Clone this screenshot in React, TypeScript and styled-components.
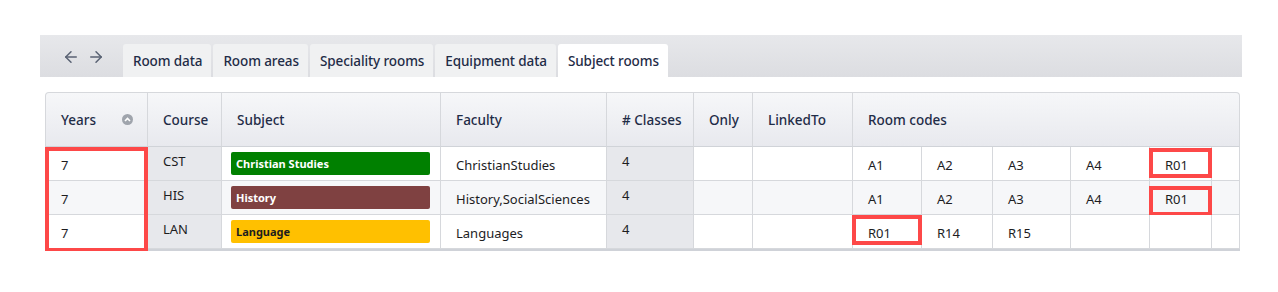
import styled, { createGlobalStyle } from 'styled-components';
import { ArrowLeft, ArrowRight } from 'lucide-react';

const GlobalStyle = createGlobalStyle`
  body {
    margin: 0;
    background: #fff;
    font-family: "Noto Sans", "Open Sans", sans-serif;
    color: #1d1d1f;
  }
`;

const Page = styled.div`
  padding: 35px 0 0 40px;
`;

const TabBar = styled.div`
  display: flex;
  align-items: flex-end;
  width: 1202px;
  height: 42px;
  background: linear-gradient(#e7e8eb, #dcdde1);
`;

const Nav = styled.div`
  display: flex;
  align-self: center;
  gap: 7px;
  padding: 2px 18px 0 22px;
  color: #596273;
`;

const Tab = styled.div<{ $active?: boolean }>`
  display: flex;
  align-items: center;
  height: 33px;
  padding: 0 9px 0 10px;
  margin-right: 2px;
  border-radius: 3px 3px 0 0;
  background: ${(p) => (p.$active ? '#fff' : '#f0f1f2')};
  color: #1f2c47;
  font-size: 13.5px;
  font-weight: 500;
  letter-spacing: -0.1px;
`;

const TableWrap = styled.div`
  margin: 15px 0 0 5px;
  width: 1195px;
`;

const Table = styled.table`
  border-collapse: separate;
  border-spacing: 0;
  table-layout: fixed;
  width: 1195px;
  border-bottom: 2px solid #cfd2d8;
`;

const Th = styled.th<{ $first?: boolean; $last?: boolean }>`
  height: 53px;
  padding: 0 8px 0 15px;
  text-align: left;
  white-space: nowrap;
  font-size: 13.5px;
  font-weight: 500;
  color: #1f2c47;
  background: linear-gradient(#f6f7f9, #e8e9ee);
  border-top: 1px solid #d6d8dc;
  border-right: 1px solid #d6d8dc;
  border-bottom: 1px solid #d0d3d8;
  ${(p) => p.$first && 'border-left: 1px solid #d6d8dc; border-top-left-radius: 4px; padding-right: 14px;'}
  ${(p) => p.$last && 'border-top-right-radius: 4px;'}
`;

const HeadInner = styled.div`
  display: flex;
  align-items: center;
  justify-content: space-between;
`;

const SortIcon = styled.span`
  display: inline-flex;
  align-items: center;
  justify-content: center;
  width: 11px;
  height: 11px;
  border-radius: 50%;
  background: #9fa4ac;
`;

type Mark = 'top' | 'middle' | 'bottom' | 'box' | undefined;

const markStyle = (m: Mark, shift = 0) => {
  if (!m) return '';
  const edges = {
    top: 'top: 0; bottom: -1px; border-bottom: none;',
    middle: 'top: -1px; bottom: -1px; border-top: none; border-bottom: none;',
    bottom: 'top: -1px; bottom: -4px; border-top: none;',
    box: `top: ${1 + shift}px; bottom: ${2 - shift}px;`,
  }[m];
  return `
    &::after {
      content: '';
      position: absolute;
      left: -1px;
      right: -1px;
      border: 4px solid #fd4848;
      ${edges}
      pointer-events: none;
    }
  `;
};

const Row = styled.tr`
  height: 34px;
`;

const Td = styled.td<{ $shade?: boolean; $alt?: boolean; $top?: boolean; $pad?: number; $mark?: Mark; $shift?: number; $first?: boolean }>`
  position: relative;
  box-sizing: border-box;
  height: 34px;
  padding: ${(p) => (p.$top ? '5px' : '2px')} 10px 0 ${(p) => p.$pad ?? 15}px;
  vertical-align: ${(p) => (p.$top ? 'top' : 'middle')};
  font-size: 13px;
  color: #1d1d1f;
  white-space: nowrap;
  background: ${(p) => (p.$shade ? '#e7e8ec' : p.$alt ? '#f6f7f9' : '#fff')};
  border-right: 1px solid #d6d8dc;
  border-bottom: 1px solid #d6d8dc;
  ${(p) => p.$first && 'border-left: 1px solid #d6d8dc;'}
  ${(p) => markStyle(p.$mark, p.$shift)}
`;

const Badge = styled.div<{ $bg: string; $fg: string }>`
  height: 23px;
  display: flex;
  align-items: center;
  padding: 0 5px;
  margin-top: -2px;
  border-radius: 2px;
  background: ${(p) => p.$bg};
  color: ${(p) => p.$fg};
  font-size: 11px;
  font-weight: 700;
`;

const widths = [103, 74, 219, 166, 87, 59, 100, 69, 71, 78, 79, 62, 28];

type RowData = {
  course: string;
  subject: string;
  bg: string;
  fg: string;
  faculty: string;
  rooms: string[];
  mark: Mark;
  roomMark: number;
  shift: number;
};

const rows: RowData[] = [
  { course: 'CST', subject: 'Christian Studies', bg: '#008000', fg: '#fff', faculty: 'ChristianStudies', rooms: ['A1', 'A2', 'A3', 'A4', 'R01', ''], mark: 'top', roomMark: 4, shift: 0 },
  { course: 'HIS', subject: 'History', bg: '#7f4141', fg: '#fff', faculty: 'History,SocialSciences', rooms: ['A1', 'A2', 'A3', 'A4', 'R01', ''], mark: 'middle', roomMark: 4, shift: 4 },
  { course: 'LAN', subject: 'Language', bg: '#ffc000', fg: '#1d1d1f', faculty: 'Languages', rooms: ['R01', 'R14', 'R15', '', '', ''], mark: 'bottom', roomMark: 0, shift: -1 },
];

export default function App() {
  const headers = ['Course', 'Subject', 'Faculty', '# Classes', 'Only', 'LinkedTo'];
  return (
    <Page>
      <GlobalStyle />
      <TabBar>
        <Nav>
          <ArrowLeft size={18} strokeWidth={2} />
          <ArrowRight size={18} strokeWidth={2} />
        </Nav>
        <Tab>Room data</Tab>
        <Tab>Room areas</Tab>
        <Tab>Speciality rooms</Tab>
        <Tab>Equipment data</Tab>
        <Tab $active>Subject rooms</Tab>
      </TabBar>
      <TableWrap>
        <Table>
          <colgroup>
            {widths.map((w, i) => (
              <col key={i} style={{ width: w }} />
            ))}
          </colgroup>
          <thead>
            <tr>
              <Th $first>
                <HeadInner>
                  Years
                  <SortIcon>
                    <svg width="7" height="5" viewBox="0 0 7 5">
                      <path d="M1 4 L3.5 1.5 L6 4" fill="none" stroke="#fff" strokeWidth="1.6" />
                    </svg>
                  </SortIcon>
                </HeadInner>
              </Th>
              {headers.map((h) => (
                <Th key={h}>{h}</Th>
              ))}
              <Th colSpan={6} $last>Room codes</Th>
            </tr>
          </thead>
          <tbody>
            {rows.map((r, i) => {
              const alt = i === 1;
              return (
                <Row key={r.course}>
                  <Td $first $alt={alt} $mark={r.mark}>7</Td>
                  <Td $shade $top>{r.course}</Td>
                  <Td $alt={alt} $pad={9}>
                    <Badge $bg={r.bg} $fg={r.fg}>{r.subject}</Badge>
                  </Td>
                  <Td $alt={alt}>{r.faculty}</Td>
                  <Td $shade $top>4</Td>
                  <Td $alt={alt} />
                  <Td $alt={alt} />
                  {r.rooms.map((code, j) => (
                    <Td
                      key={j}
                      $alt={alt}
                      $mark={j === r.roomMark ? 'box' : undefined}
                      $shift={r.shift}
                    >
                      {code}
                    </Td>
                  ))}
                </Row>
              );
            })}
          </tbody>
        </Table>
      </TableWrap>
    </Page>
  );
}
